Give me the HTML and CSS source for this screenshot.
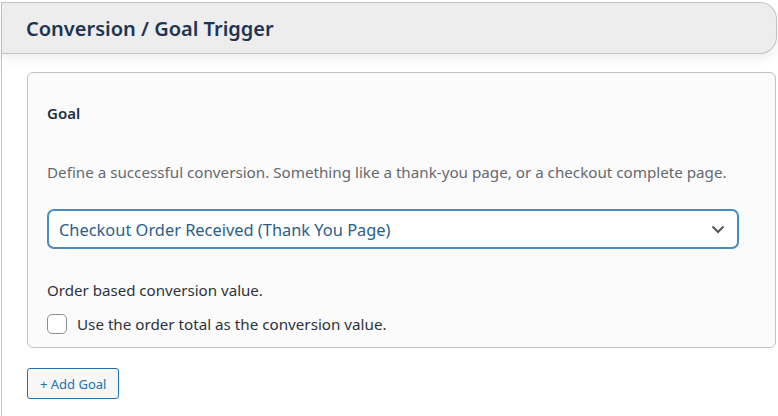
FILE: index.html
```html
<!DOCTYPE html>
<html>
<head>
<meta charset="utf-8">
<link rel="stylesheet" href="styles.css">
</head>
<body>
<div class="wrap">
  <div class="panel-head">
    <h2 class="panel-title">Conversion / Goal Trigger</h2>
  </div>
  <div class="panel-body">
    <div class="goal-card">
      <h3 class="goal-label">Goal</h3>
      <p class="desc">Define a successful conversion. Something like a thank-you page, or a checkout complete page.</p>
      <div class="select">
        <span class="select-text">Checkout Order Received (Thank You Page)</span>
        <svg class="chev" width="14" height="9" viewBox="0 0 14 9"><path d="M1.5 1.5 L7 7 L12.5 1.5" fill="none" stroke="#50575e" stroke-width="2"/></svg>
      </div>
      <p class="sub">Order based conversion value.</p>
      <label class="check-row"><span class="checkbox"></span><span class="check-text">Use the order total as the conversion value.</span></label>
    </div>
    <button class="add-btn">+ Add Goal</button>
  </div>
</div>
</body>
</html>
```
FILE: styles.css
```css
html, body {
  margin: 0;
  padding: 0;
  background: #ffffff;
}
body {
  font-family: "Noto Sans", "Open Sans", sans-serif;
  color: #1d2327;
}
.wrap {
  margin-left: 1px;
  margin-top: 2px;
  width: 776px;
  height: 414px;
  border-left: 1px solid #c3c3c3;
  box-sizing: border-box;
}
.panel-head {
  width: 775px;
  height: 52px;
  box-sizing: border-box;
  background: #ededed;
  border: 1px solid #c3c3c3;
  border-left: 0;
  border-radius: 0 17px 17px 0;
  box-shadow: 0 6px 10px rgba(0,0,0,0.06);
  display: flex;
  align-items: center;
  padding-left: 24px;
}
.panel-title {
  margin: 0;
  font-size: 20px;
  font-weight: 600;
  color: #1d3552;
}
.panel-body {
  padding: 18px 0 0 25px;
}
.goal-card {
  width: 749px;
  box-sizing: border-box;
  background: #fbfbfb;
  border: 1px solid #c3c3c3;
  border-radius: 6px;
  padding: 30px 19px 13px 19px;
}
.goal-label {
  margin: 0;
  font-size: 15px;
  font-weight: 600;
  color: #1d2f45;
  line-height: 20px;
}
.desc {
  margin: 39px 0 0 0;
  font-size: 15.2px;
  line-height: 20px;
  color: #646970;
  white-space: nowrap;
}
.select {
  margin-top: 27px;
  width: 692px;
  height: 40px;
  box-sizing: border-box;
  border: 2px solid #4a8bc4;
  border-radius: 7px;
  background: #ffffff;
  display: flex;
  align-items: center;
  justify-content: space-between;
  padding: 0 12px 0 10px;
}
.select-text {
  font-size: 16.4px;
  color: #2a5e8c;
}
.sub {
  margin: 31px 0 0 0;
  font-size: 15.1px;
  line-height: 20px;
  color: #2c3338;
}
.check-row {
  margin-top: 14px;
  height: 20px;
  display: flex;
  align-items: center;
  gap: 10px;
}
.checkbox {
  width: 20px;
  height: 20px;
  box-sizing: border-box;
  border: 1px solid #8c8f94;
  border-radius: 5px;
  background: #fff;
}
.check-text {
  font-size: 15.2px;
  line-height: 20px;
  color: #2c3338;
}
.add-btn {
  margin-top: 20px;
  font-family: inherit;
  font-size: 13px;
  color: #2271b1;
  background: #f6f7f7;
  border: 1px solid #2271b1;
  border-radius: 3px;
  height: 31px;
  padding: 0 12px;
  cursor: pointer;
}
```
